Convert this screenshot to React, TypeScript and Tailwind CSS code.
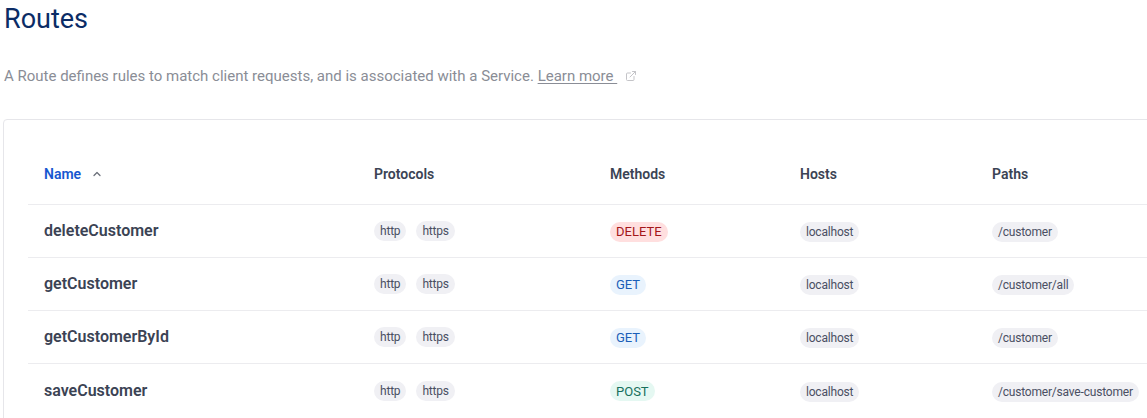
import { ChevronUp, ExternalLink } from "lucide-react";

type Route = {
  name: string;
  protocols: string[];
  method: "GET" | "POST" | "DELETE";
  host: string;
  path: string;
};

const routes: Route[] = [
  { name: "deleteCustomer", protocols: ["http", "https"], method: "DELETE", host: "localhost", path: "/customer" },
  { name: "getCustomer", protocols: ["http", "https"], method: "GET", host: "localhost", path: "/customer/all" },
  { name: "getCustomerById", protocols: ["http", "https"], method: "GET", host: "localhost", path: "/customer" },
  { name: "saveCustomer", protocols: ["http", "https"], method: "POST", host: "localhost", path: "/customer/save-customer" },
];

const methodStyles = {
  DELETE: "bg-[#ffdfdf] text-[#a4161a]",
  GET: "bg-[#e9f3fd] text-[#1b5fb8]",
  POST: "bg-[#e5f8f2] text-[#17705d]",
};

const Badge = ({ children, className = "bg-[#f0f0f4] text-[#4a4f63] text-[12px] tracking-[-0.2px]" }: { children: string; className?: string }) => (
  <span className={`inline-flex h-[20px] items-center rounded-full px-[6px] leading-none ${className}`}>
    {children}
  </span>
);

const cols = "grid grid-cols-[330px_236px_190px_192px_1fr] items-center";

export default function App() {
  return (
    <div className="w-[1147px] h-[418px] overflow-hidden bg-white font-['Roboto',sans-serif]">
      <h1 className="pl-[4px] pt-[1px] text-[27px] leading-[36px] text-[#0b2c66]">Routes</h1>
      <p className="mt-[29px] pl-[4px] text-[15px] leading-[20px] text-[#8a8d96]">
        A Route defines rules to match client requests, and is associated with a Service.{" "}
        <a className="underline underline-offset-2 text-[#8a8d96]">Learn more </a>
        <ExternalLink className="ml-[8px] inline h-[12px] w-[12px] align-[-1px] text-[#c4c4c8]" strokeWidth={2} />
      </p>

      <div className="mt-[33px] ml-[3px] w-[1200px] rounded-[4px] border border-[#e6e6ea] pl-[24px] pt-[24px] pb-[24px]">
        <div className={`${cols} h-[61px] border-b border-[#ececef] text-[14px] font-semibold text-[#3b4354]`}>
          <div className="flex items-center gap-[10px] pl-[16px] text-[#1657d0]">
            Name
            <ChevronUp className="h-[12px] w-[12px] text-[#6b6f7a]" strokeWidth={2.5} />
          </div>
          <div className="pl-[16px]">Protocols</div>
          <div className="pl-[16px]">Methods</div>
          <div className="pl-[16px]">Hosts</div>
          <div className="pl-[16px]">Paths</div>
        </div>

        {routes.map((r, i) => (
          <div
            key={r.name}
            className={`${cols} h-[53px] ${i < routes.length - 1 ? "border-b border-[#ececef]" : ""}`}
          >
            <div className="pl-[16px] text-[16px] font-semibold text-[#3b4354]">{r.name}</div>
            <div className="flex gap-[10px] pl-[16px]">
              {r.protocols.map((p) => (
                <Badge key={p}>{p}</Badge>
              ))}
            </div>
            <div className="pl-[16px]">
              <Badge className={`text-[13px] ${methodStyles[r.method]}`}>{r.method}</Badge>
            </div>
            <div className="pl-[16px]">
              <Badge>{r.host}</Badge>
            </div>
            <div className="pl-[16px]">
              <Badge>{r.path}</Badge>
            </div>
          </div>
        ))}
      </div>
    </div>
  );
}
